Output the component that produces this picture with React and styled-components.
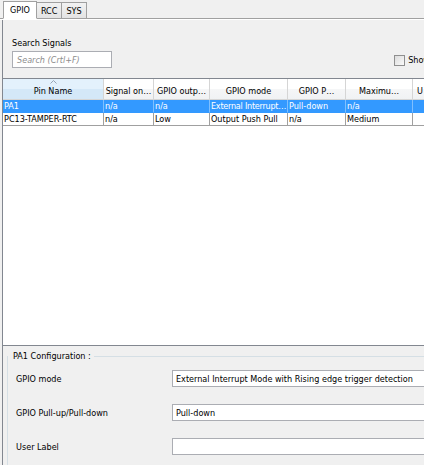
import React from "react";
import styled, { createGlobalStyle } from "styled-components";

const Global = createGlobalStyle`
  html, body { margin: 0; padding: 0; }
  body { background: #f0f0f0; }
  * { box-sizing: border-box; }
`;

const Root = styled.div`
  width: 424px;
  height: 465px;
  overflow: hidden;
  background: #f0f0f0;
  font-family: "DejaVu Sans Condensed", "DejaVu Sans", Tahoma, sans-serif;
  font-stretch: condensed;
  font-size: 9px;
  color: #000;
  display: flex;
  flex-direction: column;
`;

const TabBar = styled.div`
  height: 19px;
  display: flex;
  align-items: flex-end;
  padding-left: 3px;
  border-bottom: 1px solid #a0a0a0;
  box-shadow: 0 1px 0 #fff;
  position: relative;
  z-index: 1;
`;

const Tab = styled.div`
  height: ${(p) => (p.$active ? "18px" : "16px")};
  margin-bottom: ${(p) => (p.$active ? "-1px" : "0")};
  padding: 0 ${(p) => (p.$active ? "6px" : "4px")};
  display: flex;
  align-items: center;
  background: ${(p) => (p.$active ? "#fff" : "linear-gradient(#f2f2f2, #e3e3e3)")};
  border: 1px solid #a0a0a0;
  border-bottom: ${(p) => (p.$active ? "1px solid #fff" : "none")};
  margin-left: ${(p) => (p.$active ? "0" : "-1px")};
  font-size: 9px;
`;

const Body = styled.div`
  flex: 1;
  display: flex;
  flex-direction: column;
  border-left: 1px solid #828790;
  margin-left: 2px;
  margin-top: 1px;
`;

const SearchArea = styled.div`
  height: 59px;
  padding: 18px 0 0 9px;
  display: flex;
  justify-content: space-between;
  border-bottom: 1px solid #828790;
`;

const SearchCol = styled.div`
  display: flex;
  flex-direction: column;
  gap: 3px;
`;

const Label = styled.div`
  font-size: 9px;
  white-space: nowrap;
`;

const SearchBox = styled.div`
  width: 100px;
  height: 17px;
  background: #fff;
  border: 1px solid #abadb3;
  color: #8d8d8d;
  font-style: italic;
  padding-left: 4px;
  display: flex;
  align-items: center;
  font-size: 9px;
`;

const ShowWrap = styled.div`
  display: flex;
  align-items: center;
  gap: 3px;
  margin-top: 16px;
  margin-right: -6px;
  height: 12px;
`;

const Check = styled.div`
  width: 11px;
  height: 11px;
  border: 1px solid #8f8f8f;
  background: linear-gradient(135deg, #dcdcdc, #fafafa);
`;

const TableArea = styled.div`
  height: 267px;
  background: #fff;
  border-bottom: 1px solid #828790;
  overflow: hidden;
`;

const Grid = styled.div`
  display: grid;
  grid-template-columns: 101px 50px 56px 78px 58px 67px 40px;
`;

const Head = styled.div`
  height: 21px;
  position: relative;
  display: flex;
  align-items: center;
  white-space: nowrap;
  overflow: hidden;
  background: ${(p) =>
    p.$sorted
      ? "linear-gradient(#e3f1fc 0%, #e3f1fc 50%, #d4e8f8 51%, #d4e8f8 100%)"
      : "linear-gradient(#ffffff 0%, #ffffff 50%, #f5f6f7 51%, #f0f2f4 100%)"};
  border-right: 1px solid #d5d5d5;
  border-bottom: 1px solid #d5d5d5;
  padding-top: 4px;
  font-size: 9px;
  justify-content: ${(p) => (p.$left ? "flex-start" : "center")};
  padding-left: ${(p) => (p.$left ? "4px" : "0")};
`;

const SortArrow = styled.svg`
  position: absolute;
  top: 1px;
  left: 50%;
  margin-left: -3px;
`;

const Cell = styled.div`
  height: 13px;
  line-height: 12px;
  padding-left: 1px;
  white-space: nowrap;
  overflow: hidden;
  font-size: 9px;
  letter-spacing: ${(p) => (p.$tight ? "-0.25px" : "0")};
  color: ${(p) => (p.$sel ? "#fff" : "#000")};
  background: ${(p) => (p.$sel ? "#3399ff" : "#fff")};
  border-right: 1px solid ${(p) => (p.$sel ? "#7fbfff" : "#a0a0a0")};
  border-bottom: 1px solid ${(p) => (p.$sel ? "#3399ff" : "#a0a0a0")};
`;

const Config = styled.div`
  flex: 1;
  padding: 3px 0 0 4px;
  display: flex;
  flex-direction: column;
`;

const Legend = styled.div`
  display: flex;
  align-items: center;
  gap: 3px;
  font-size: 9px;
  padding-left: 6px;
  height: 13px;
  &::after {
    content: "";
    flex: 1;
    border-top: 1px solid #d5dfe5;
    margin-top: 1px;
  }
`;

const Fieldset = styled.div`
  flex: 1;
  border-left: 1px solid #d5dfe5;
  margin-top: -6px;
  padding-top: 14px;
  display: flex;
  flex-direction: column;
  gap: 17px;
`;

const Row = styled.div`
  display: flex;
  align-items: center;
  height: 17px;
`;

const RowLabel = styled.div`
  width: 164px;
  padding-left: 8px;
  font-size: 9px;
`;

const Field = styled.div`
  flex: 1;
  height: 17px;
  background: #fff;
  border: 1px solid #abadb3;
  border-right: none;
  padding-left: 3px;
  display: flex;
  align-items: center;
  white-space: nowrap;
  overflow: hidden;
  font-size: 9px;
`;

const cols = [
  { t: "Pin Name", sorted: true },
  { t: "Signal on…" },
  { t: "GPIO outp…" },
  { t: "GPIO mode" },
  { t: "GPIO P…" },
  { t: "Maximu…" },
  { t: "U", left: true },
];

const rows = [
  { sel: true, v: ["PA1", "n/a", "n/a", "External Interrupt…", "Pull-down", "n/a", ""] },
  { sel: false, v: ["PC13-TAMPER-RTC", "n/a", "Low", "Output Push Pull", "n/a", "Medium", ""] },
];

export default function App() {
  return (
    <Root>
      <Global />
      <TabBar>
        <Tab $active>GPIO</Tab>
        <Tab>RCC</Tab>
        <Tab>SYS</Tab>
      </TabBar>
      <Body>
        <SearchArea>
          <SearchCol>
            <Label>Search Signals</Label>
            <SearchBox>Search (Crtl+F)</SearchBox>
          </SearchCol>
          <ShowWrap>
            <Check />
            <Label>Show</Label>
          </ShowWrap>
        </SearchArea>
        <TableArea>
          <Grid>
            {cols.map((c) => (
              <Head key={c.t} $sorted={c.sorted} $left={c.left}>
                {c.sorted && (
                  <SortArrow width="7" height="4" viewBox="0 0 7 4">
                    <path d="M0.5 3.5 L3.5 0.5 L6.5 3.5" fill="none" stroke="#97a5b4" strokeWidth="1" />
                  </SortArrow>
                )}
                {c.t}
              </Head>
            ))}
            {rows.map((r) =>
              r.v.map((v, i) => (
                <Cell key={r.v[0] + i} $sel={r.sel} $tight={v.length > 16}>
                  {v}
                </Cell>
              ))
            )}
          </Grid>
        </TableArea>
        <Config>
          <Legend>PA1 Configuration :</Legend>
          <Fieldset>
            <Row>
              <RowLabel>GPIO mode</RowLabel>
              <Field>External Interrupt Mode with Rising edge trigger detection</Field>
            </Row>
            <Row>
              <RowLabel>GPIO Pull-up/Pull-down</RowLabel>
              <Field>Pull-down</Field>
            </Row>
            <Row>
              <RowLabel>User Label</RowLabel>
              <Field />
            </Row>
          </Fieldset>
        </Config>
      </Body>
    </Root>
  );
}
